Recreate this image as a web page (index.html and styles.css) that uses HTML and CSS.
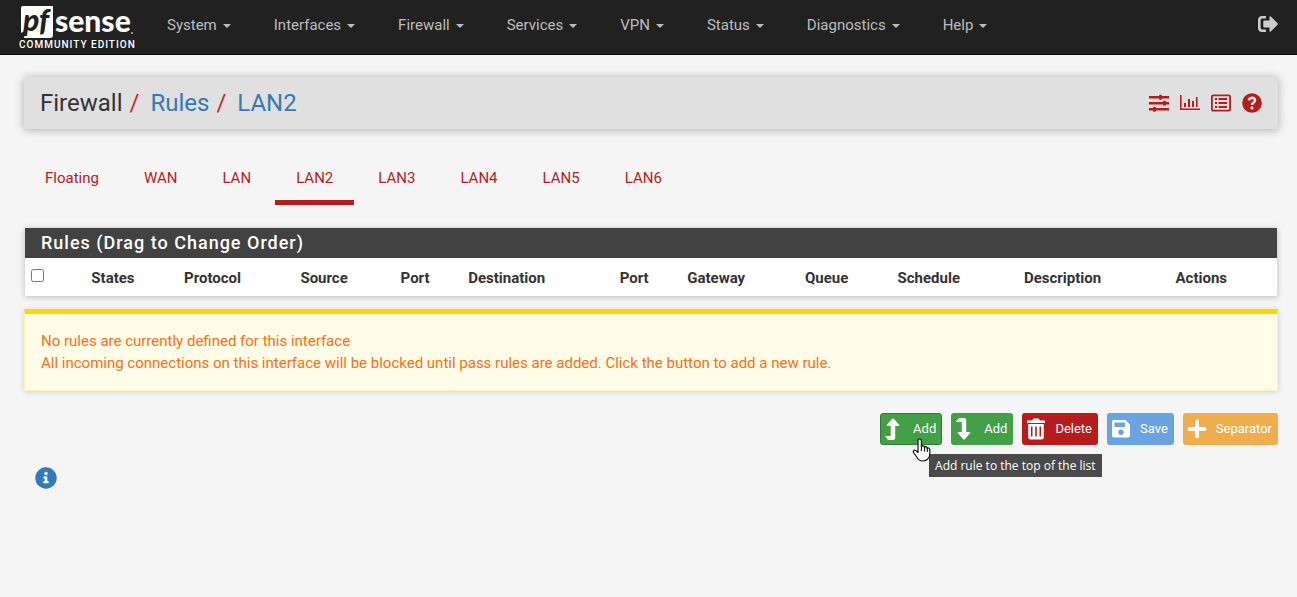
FILE: index.html
```html
<!DOCTYPE html>
<html lang="en">
<head>
<meta charset="utf-8">
<title>Firewall: Rules: LAN2</title>
<link rel="stylesheet" href="styles.css">
</head>
<body>
<header class="navbar">
  <a class="brand" href="#" aria-label="pfSense Community Edition">
    <svg class="brand-logo" viewBox="0 -6 118 54" width="118" height="54">
      <path d="M5 0H35V29Q35 32 32 32H6L8 24 3 27V2Q3 0 5 0Z" fill="#fff"/>
      <text class="logo-pf" x="5" y="25">pf</text>
      <text class="logo-sense" x="37" y="26">sense</text>
      <circle cx="114" cy="27" r="1" fill="#bbb"/>
      <text class="logo-edition" x="1" y="42">COMMUNITY EDITION</text>
    </svg>
  </a>
  <nav class="menu">
    <a href="#">System<span class="caret"></span></a>
    <a href="#">Interfaces<span class="caret"></span></a>
    <a href="#">Firewall<span class="caret"></span></a>
    <a href="#">Services<span class="caret"></span></a>
    <a href="#">VPN<span class="caret"></span></a>
    <a href="#">Status<span class="caret"></span></a>
    <a href="#">Diagnostics<span class="caret"></span></a>
    <a href="#">Help<span class="caret"></span></a>
  </nav>
  <a class="logout" href="#" aria-label="Logout">
    <svg viewBox="0 0 20 16" width="20" height="16"><path d="M8 1.300H4.200Q1.300 1.300 1.300 4V12Q1.300 14.700 4.200 14.700H8" fill="none" stroke="#ccc" stroke-width="2.600"/><path d="M6.200 4.500H11.500V1Q11.600-.2 12.800.6L19.600 7.300Q20 8 19.600 8.700L12.800 15.400Q11.600 16.200 11.500 15V11.500H6.200Q5.300 11.500 5.300 10.500V5.500Q5.300 4.500 6.200 4.500Z" fill="#ccc"/></svg>
  </a>
</header>

<main class="container">
  <div class="page-header">
    <h1 class="breadcrumb"><span>Firewall</span><span class="slash">/</span><a href="#">Rules</a><span class="slash">/</span><a href="#">LAN2</a></h1>
    <div class="shortcuts">
      <a href="#" aria-label="Related settings"><svg viewBox="0 0 20 18" width="20" height="18" fill="#b71c1c"><path d="M0 2H20V4.400H0ZM0 8H20V10.400H0ZM0 14H20V16.400H0Z"/><rect x="10" y=".7" width="3" height="5" rx="1"/><rect x="14" y="6.700" width="3" height="5" rx="1"/><rect x="4" y="12.700" width="3" height="5" rx="1"/></svg></a>
      <a href="#" aria-label="Status graph"><svg viewBox="0 0 20 18" width="20" height="18" fill="#b71c1c"><path d="M0 1H1.600V14.400H20V16H0ZM4 9H6V13H4ZM8 5H10V13H8ZM12 7H14V13H12ZM16 3H17.600V13H16Z"/></svg></a>
      <a href="#" aria-label="Log entries"><svg viewBox="0 0 20 18" width="20" height="18" fill="#b71c1c"><rect x=".9" y="1.300" width="18.200" height="15.400" rx="1.500" fill="none" stroke="#b71c1c" stroke-width="1.800"/><path d="M4 4H6V6H4ZM4 8H6V10H4ZM4 12H6V14H4ZM7.500 4H16V6H7.500ZM7.500 8H16V10H7.500ZM7.500 12H16V14H7.500Z"/></svg></a>
      <a href="#" aria-label="Help"><svg viewBox="0 0 20 20" width="20" height="20"><circle cx="10" cy="10" r="9.800" fill="#b71c1c"/><path d="M6.800 7.500Q7.500 4.800 10.200 4.800 13 5 13 7.500 12.900 8.800 11.200 9.800 10 10.600 10 11.900" fill="none" stroke="#e0e0e0" stroke-width="2.600"/><circle cx="10" cy="14.900" r="1.600" fill="#e0e0e0"/></svg></a>
    </div>
  </div>

  <nav class="tabs">
    <a href="#">Floating</a>
    <a href="#">WAN</a>
    <a href="#">LAN</a>
    <a class="active" href="#" aria-current="page">LAN2</a>
    <a href="#">LAN3</a>
    <a href="#">LAN4</a>
    <a href="#">LAN5</a>
    <a href="#">LAN6</a>
  </nav>

  <section class="panel">
    <h2 class="panel-title">Rules (Drag to Change Order)</h2>
    <table class="rules">
      <colgroup><col class="c-check"><col class="c-states"><col class="c-protocol"><col class="c-source"><col class="c-port"><col class="c-dest"><col class="c-port"><col class="c-gateway"><col class="c-queue"><col class="c-schedule"><col class="c-desc"><col class="c-actions"></colgroup>
      <thead>
        <tr><th><input type="checkbox" aria-label="Select all rules"></th><th>States</th><th>Protocol</th><th>Source</th><th>Port</th><th>Destination</th><th>Port</th><th>Gateway</th><th>Queue</th><th>Schedule</th><th>Description</th><th>Actions</th></tr>
      </thead>
    </table>
  </section>

  <div class="alert">
    <p>No rules are currently defined for this interface</p>
    <p>All incoming connections on this interface will be blocked until pass rules are added. Click the button to add a new rule.</p>
  </div>

  <div class="actions">
    <div class="hint-anchor">
      <button class="btn green hover" type="button" aria-describedby="add-tip"><svg viewBox="0 0 20 22" width="20" height="22" fill="#fff"><path d="M1 18H6.800V8H3.200Q2 8 2.800 7L8.200.8Q9 0 9.800.8L15.200 7Q16 8 14.800 8H11.200V19.500Q11.200 22 8.700 22H4Z"/></svg>Add</button>
      <div class="tooltip" id="add-tip" role="tooltip">Add rule to the top of the list</div>
      <svg class="pointer" viewBox="0 0 20 24" width="20" height="24"><path d="M6 13V3Q6 1 7.700 1T9.400 3V9Q9.600 7.500 11 7.600T12.500 9.600Q12.800 8.400 14 8.600T15.300 10.600Q15.600 9.600 16.700 10T17.800 12V16Q17.800 19.500 15.500 21.300 13.500 23 10.500 23 7 23 5 19.500L1.500 14.500Q.8 13 2 12.300 3.500 11.600 6 14.500Z" fill="#fff" stroke="#111" stroke-width="1.200" stroke-linejoin="round"/><path d="M9.400 8.500V13M12.500 9.500V13.500M15.300 10.500V14" stroke="#111" stroke-width="1.100"/></svg>
    </div>
    <button class="btn green" type="button"><svg viewBox="0 0 20 22" width="20" height="22" fill="#fff"><path d="M1 4H6.800V14H3.200Q2 14 2.800 15L8.200 21.200Q9 22 9.800 21.200L15.200 15Q16 14 14.800 14H11.200V2.500Q11.200 0 8.700 0H4Z"/></svg>Add</button>
    <button class="btn red" type="button"><svg viewBox="0 0 20 22" width="20" height="22" fill="#fff"><path fill-rule="evenodd" d="M1 2.500H6L7.500.5H12.500L14 2.500H19V5H1ZM2.200 6H17.800V19Q17.800 21.500 15.300 21.500H4.700Q2.200 21.500 2.200 19ZM5 8.500V18.500H6.500V8.500ZM9.200 8.500V18.500H10.800V8.500ZM13.500 8.500V18.500H15V8.500Z"/></svg>Delete</button>
    <button class="btn blue" type="button"><svg viewBox="0 0 20 22" width="20" height="22" fill="#fff"><path fill-rule="evenodd" d="M3 2H14.500L19 6.500V17.500Q19 19.500 17 19.500H3Q1 19.500 1 17.500V4Q1 2 3 2ZM3.500 4.500V9H14V4.500ZM10 11.500A2.700 2.700 0 1 0 10 16.900A2.700 2.700 0 1 0 10 11.500Z"/></svg>Save</button>
    <button class="btn orange" type="button"><svg viewBox="0 0 20 22" width="20" height="22"><path d="M10 3.500V18.500M2.500 11H17.500" stroke="#fff" stroke-width="4" stroke-linecap="round"/></svg>Separator</button>
  </div>

  <button class="info" type="button" aria-label="Show information"><svg viewBox="0 0 22 22" width="22" height="22"><circle cx="11" cy="11" r="10.700" fill="#337ab7"/><circle cx="11" cy="6.500" r="1.700" fill="#fff"/><path d="M8.500 9.500H12.300V14.300H13.700V16.300H8.300V14.300H9.700V11.500H8.500Z" fill="#fff"/></svg></button>
</main>
</body>
</html>
```
FILE: styles.css
```css
* { box-sizing: border-box; }

body {
  margin: 0;
  background: #f5f5f5;
  color: #333;
  font: 15px/22px Roboto, "Liberation Sans", sans-serif;
}

a { color: inherit; text-decoration: none; }
svg { display: block; }
h1, h2, p { margin: 0; font-weight: 400; }

.navbar {
  display: flex;
  align-items: flex-start;
  padding: 0 19px 0 18px;
  min-height: 55px;
  background: #212121;
  border-bottom: 1px solid #080808;
}
.brand-logo { overflow: visible; }
.logo-pf { font: italic 900 30px Lato, sans-serif; fill: #212121; }
.logo-sense { font: 900 30px Lato, sans-serif; fill: #fff; }
.logo-edition { font: 500 10px Roboto, sans-serif; letter-spacing: 1px; fill: #fff; }

.menu { display: flex; flex: 1; gap: 1px; padding-left: 10px; }
.menu a {
  display: flex;
  align-items: center;
  gap: 6px;
  padding: 14px 21px;
  color: #bdbdbd;
}
.caret {
  margin-top: 2px;
  border: 4px solid transparent;
  border-top-color: currentColor;
  border-bottom: 0;
}
.logout { padding-top: 16px; }

.container { padding: 22px 19px 0 24px; }

.page-header {
  display: flex;
  align-items: center;
  justify-content: space-between;
  padding: 10px 16px;
  background: #e0e0e0;
  border-radius: 2px;
  box-shadow: 0 1px 10px rgba(0, 0, 0, .3);
}
.breadcrumb { display: flex; font-size: 24px; line-height: 32px; }
.breadcrumb a { color: #337ab7; }
.slash { padding: 0 11px 0 7px; color: #c62828; }
.shortcuts { display: flex; align-items: center; gap: 11px; }

.tabs { display: flex; gap: 3px; margin-top: 22px; }
.tabs a {
  padding: 16px 21px 11px;
  color: #b71c1c;
  border-bottom: 5px solid transparent;
}
.tabs .active { border-bottom-color: #b71c1c; }

.panel {
  margin: 23px 1px 0;
  background: #fff;
  box-shadow: 0 1px 6px rgba(0, 0, 0, .25);
}
.panel-title {
  padding: 4px 16px;
  background: #424242;
  color: #fff;
  font-size: 18px;
  font-weight: 500;
  letter-spacing: 1px;
  line-height: 22px;
}
.rules { width: 100%; table-layout: fixed; border-collapse: collapse; }
.rules th {
  padding: 9px 5px 7px;
  text-align: left;
  font-weight: 700;
}
.rules input { display: block; width: 13px; height: 13px; margin: 0 0 6px 1px; }
.c-check { width: 4.9%; }
.c-states, .c-queue { width: 7.4%; }
.c-protocol { width: 9.3%; }
.c-source { width: 8%; }
.c-port { width: 5.4%; }
.c-dest, .c-desc { width: 12.1%; }
.c-gateway { width: 9.4%; }
.c-schedule { width: 10.1%; }
.c-actions { width: 8.5%; }

.alert {
  margin-top: 13px;
  padding: 16px;
  background: #fffde7;
  color: #f57022;
  border: 1px solid #fff3b0;
  border-top: 5px solid #ffd600;
  box-shadow: 0 1px 6px rgba(0, 0, 0, .15);
}

.actions { display: flex; justify-content: flex-end; gap: 9px; margin-top: 22px; }
.btn {
  display: flex;
  align-items: center;
  justify-content: space-between;
  gap: 9px;
  height: 32px;
  padding: 0 5px 0 3px;
  border: 1px solid transparent;
  border-radius: 3px;
  color: #fff;
  font: 13px/20px Roboto, "Liberation Sans", sans-serif;
}
.green { background: #43a047; }
.hover { border-color: #2e7d32; }
.red { background: #b71c1c; }
.blue { background: #6aa3df; }
.orange { background: #f0ad4e; }

.hint-anchor { position: relative; }
.tooltip {
  position: absolute;
  top: 41px;
  left: 49px;
  padding: 3px 6px;
  background: #4a4a4a;
  color: #fff;
  font: 12px/17px "Open Sans", "Noto Sans", sans-serif;
  white-space: nowrap;
}
.pointer { position: absolute; top: 25px; left: 32px; }

.info { margin: 22px 0 0 11px; padding: 0; border: 0; background: none; }
```
